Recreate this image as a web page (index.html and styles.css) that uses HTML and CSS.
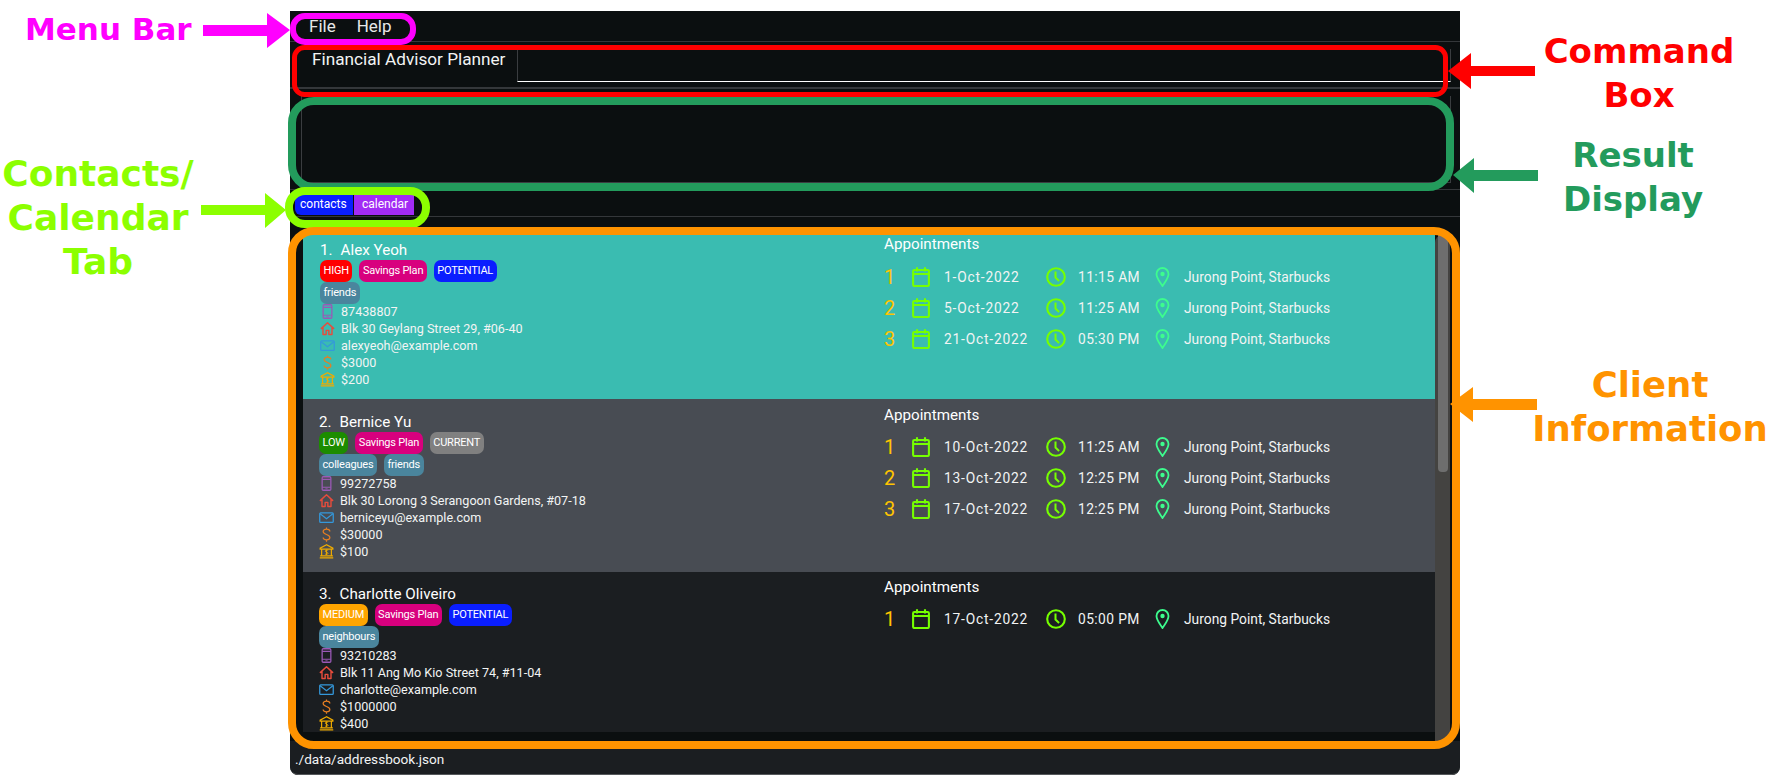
FILE: index.html
```html
<!DOCTYPE html>
<html lang="en">
<head>
<meta charset="utf-8">
<title>Financial Advisor Planner</title>
<link rel="stylesheet" href="styles.css">
</head>
<body>
<svg class="sprites" width="0" height="0" aria-hidden="true">
  <symbol id="i-phone" viewBox="0 0 16 20"><rect x="2.2" y="1" width="11.6" height="18" rx="1.5" fill="none" stroke="currentColor" stroke-width="1.7"/><path d="M2.2 4.5h11.6M2.2 15h11.6" stroke="currentColor" stroke-width="1.4"/><path d="M6.5 17h3" stroke="currentColor" stroke-width="1"/></symbol>
  <symbol id="i-home" viewBox="0 0 20 20"><path d="M1.2 10.5 10 2.2l8.8 8.3M4 8.500V18h4.200v-5.500h3.600V18H16V8.500" fill="none" stroke="currentColor" stroke-width="1.9" stroke-linejoin="round"/></symbol>
  <symbol id="i-mail" viewBox="0 0 20 16"><rect x="1" y="1.8" width="18" height="12.6" rx="1.2" fill="none" stroke="currentColor" stroke-width="1.7"/><path d="M1.5 3 10 9.500 18.500 3" fill="none" stroke="currentColor" stroke-width="1.6"/></symbol>
  <symbol id="i-dollar" viewBox="0 0 12 20"><path d="M10.500 6C10.500 3.800 8.400 2.800 6 2.800S1.500 4 1.500 6c0 4.600 9 3.300 9 8 0 2.100-2 3.200-4.500 3.200S1.500 16.100 1.500 14M6 .5v2.300M6 17.200v2.300" fill="none" stroke="currentColor" stroke-width="1.6"/></symbol>
  <symbol id="i-bank" viewBox="0 0 20 20"><path d="M10 1 1.500 5.500v1.300h17V5.500zM3.500 7v8.500M16.500 7v8.500M1.500 15.800h17M1 18.500h18" fill="none" stroke="currentColor" stroke-width="1.6"/><path d="M12.200 8.800c-.4-.8-3.800-1-3.900.7-.1 1.900 3.800 1 3.700 3-.1 1.700-3.600 1.500-4.100.5M10 7.500v7" fill="none" stroke="currentColor" stroke-width="1.2"/></symbol>
  <symbol id="i-cal" viewBox="0 0 18 20"><rect x="1.100" y="3" width="15.800" height="16" rx="1.200" fill="none" stroke="currentColor" stroke-width="2.100"/><path d="M1 7h16M5 .2v4.300M13 .2v4.300" stroke="currentColor" stroke-width="2.100"/></symbol>
  <symbol id="i-clock" viewBox="0 0 20 20"><circle cx="10" cy="10" r="8.800" fill="none" stroke="currentColor" stroke-width="2.100"/><path d="M9.500 4.500v6l3.600 3.400" fill="none" stroke="currentColor" stroke-width="2"/></symbol>
  <symbol id="i-pin" viewBox="0 0 14 20"><path d="M7 19C4 14.500 1 11 1 7a6 6 0 0 1 12 0c0 4-3 7.500-6 12z" fill="none" stroke="currentColor" stroke-width="1.800"/><circle cx="7" cy="7" r="2.200" fill="currentColor"/></symbol>
</svg>

<main class="stage">
  <div class="window">
    <nav class="menubar"><span class="menu-item">File</span><span class="menu-item">Help</span></nav>
    <section class="command">
      <span class="command-title">Financial Advisor Planner</span>
      <div class="command-field"></div>
    </section>
    <section class="result"><div class="result-box"></div></section>
    <section class="tabs"><span class="tab tab-contacts">contacts</span><span class="tab tab-calendar">calendar</span></section>

    <section class="list-pane">
      <div class="list">
        <article class="card card-first">
          <div class="person">
            <h2 class="name"><span class="index">1.</span>Alex Yeoh</h2>
            <div class="tags"><span class="tag t-high">HIGH</span><span class="tag t-plan">Savings Plan</span><span class="tag t-blue">POTENTIAL</span></div>
            <div class="tags"><span class="tag t-teal">friends</span></div>
            <ul class="fields">
              <li><svg class="ic c-phone"><use href="#i-phone"/></svg>87438807</li>
              <li><svg class="ic c-home"><use href="#i-home"/></svg>Blk 30 Geylang Street 29, #06-40</li>
              <li><svg class="ic c-mail"><use href="#i-mail"/></svg>alexyeoh@example.com</li>
              <li><svg class="ic c-dollar"><use href="#i-dollar"/></svg>$3000</li>
              <li><svg class="ic c-bank"><use href="#i-bank"/></svg>$200</li>
            </ul>
          </div>
          <div class="appts">
            <h3 class="appts-title">Appointments</h3>
            <div class="appt"><span class="no">1</span><svg class="ai c-cal"><use href="#i-cal"/></svg><span class="dt">1-Oct-2022</span><svg class="ai c-cal"><use href="#i-clock"/></svg><span class="tm">11:15 AM</span><svg class="ai c-pin"><use href="#i-pin"/></svg><span>Jurong Point, Starbucks</span></div>
            <div class="appt"><span class="no">2</span><svg class="ai c-cal"><use href="#i-cal"/></svg><span class="dt">5-Oct-2022</span><svg class="ai c-cal"><use href="#i-clock"/></svg><span class="tm">11:25 AM</span><svg class="ai c-pin"><use href="#i-pin"/></svg><span>Jurong Point, Starbucks</span></div>
            <div class="appt"><span class="no">3</span><svg class="ai c-cal"><use href="#i-cal"/></svg><span class="dt">21-Oct-2022</span><svg class="ai c-cal"><use href="#i-clock"/></svg><span class="tm">05:30 PM</span><svg class="ai c-pin"><use href="#i-pin"/></svg><span>Jurong Point, Starbucks</span></div>
          </div>
        </article>

        <article class="card card-second">
          <div class="person">
            <h2 class="name"><span class="index">2.</span>Bernice Yu</h2>
            <div class="tags"><span class="tag t-low">LOW</span><span class="tag t-plan">Savings Plan</span><span class="tag t-grey">CURRENT</span></div>
            <div class="tags"><span class="tag t-teal">colleagues</span><span class="tag t-teal">friends</span></div>
            <ul class="fields">
              <li><svg class="ic c-phone"><use href="#i-phone"/></svg>99272758</li>
              <li><svg class="ic c-home"><use href="#i-home"/></svg>Blk 30 Lorong 3 Serangoon Gardens, #07-18</li>
              <li><svg class="ic c-mail"><use href="#i-mail"/></svg>berniceyu@example.com</li>
              <li><svg class="ic c-dollar"><use href="#i-dollar"/></svg>$30000</li>
              <li><svg class="ic c-bank"><use href="#i-bank"/></svg>$100</li>
            </ul>
          </div>
          <div class="appts">
            <h3 class="appts-title">Appointments</h3>
            <div class="appt"><span class="no">1</span><svg class="ai c-cal"><use href="#i-cal"/></svg><span class="dt">10-Oct-2022</span><svg class="ai c-cal"><use href="#i-clock"/></svg><span class="tm">11:25 AM</span><svg class="ai c-pin"><use href="#i-pin"/></svg><span>Jurong Point, Starbucks</span></div>
            <div class="appt"><span class="no">2</span><svg class="ai c-cal"><use href="#i-cal"/></svg><span class="dt">13-Oct-2022</span><svg class="ai c-cal"><use href="#i-clock"/></svg><span class="tm">12:25 PM</span><svg class="ai c-pin"><use href="#i-pin"/></svg><span>Jurong Point, Starbucks</span></div>
            <div class="appt"><span class="no">3</span><svg class="ai c-cal"><use href="#i-cal"/></svg><span class="dt">17-Oct-2022</span><svg class="ai c-cal"><use href="#i-clock"/></svg><span class="tm">12:25 PM</span><svg class="ai c-pin"><use href="#i-pin"/></svg><span>Jurong Point, Starbucks</span></div>
          </div>
        </article>

        <article class="card card-third">
          <div class="person">
            <h2 class="name"><span class="index">3.</span>Charlotte Oliveiro</h2>
            <div class="tags"><span class="tag t-medium">MEDIUM</span><span class="tag t-plan">Savings Plan</span><span class="tag t-blue">POTENTIAL</span></div>
            <div class="tags"><span class="tag t-teal">neighbours</span></div>
            <ul class="fields">
              <li><svg class="ic c-phone"><use href="#i-phone"/></svg>93210283</li>
              <li><svg class="ic c-home"><use href="#i-home"/></svg>Blk 11 Ang Mo Kio Street 74, #11-04</li>
              <li><svg class="ic c-mail"><use href="#i-mail"/></svg>charlotte@example.com</li>
              <li><svg class="ic c-dollar"><use href="#i-dollar"/></svg>$1000000</li>
              <li><svg class="ic c-bank"><use href="#i-bank"/></svg>$400</li>
            </ul>
          </div>
          <div class="appts">
            <h3 class="appts-title">Appointments</h3>
            <div class="appt"><span class="no">1</span><svg class="ai c-cal"><use href="#i-cal"/></svg><span class="dt">17-Oct-2022</span><svg class="ai c-cal"><use href="#i-clock"/></svg><span class="tm">05:00 PM</span><svg class="ai c-pin"><use href="#i-pin"/></svg><span>Jurong Point, Starbucks</span></div>
          </div>
        </article>
      </div>
      <div class="scrollbar"><div class="thumb"></div></div>
    </section>

    <footer class="status">./data/addressbook.json</footer>
  </div>
</main>

<svg class="overlay" width="1774" height="780" aria-hidden="true">
  <rect class="o-magenta" x="293" y="16" width="120" height="26" rx="12"/>
  <rect class="o-red" x="294.5" y="47.5" width="1151" height="47" rx="10"/>
  <rect class="o-green" x="292" y="101" width="1158" height="86" rx="22"/>
  <rect class="o-lime" x="289" y="191" width="137" height="33" rx="16"/>
  <rect class="o-orange" x="292" y="231" width="1164" height="514" rx="22"/>
  <polygon class="a-magenta" points="203,25 267,25 267,13 290,30 267,48 267,36 203,36"/>
  <polygon class="a-red" points="1535,66 1471,66 1471,53 1448,71 1471,89 1471,76 1535,76"/>
  <polygon class="a-green" points="1538,170 1474,170 1474,158 1453,175 1474,193 1474,181 1538,181"/>
  <polygon class="a-lime" points="201,205 265,205 265,193 286,210 265,228 265,215 201,215"/>
  <polygon class="a-orange" points="1537,399 1473,399 1473,387 1450,404 1473,422 1473,410 1537,410"/>
</svg>

<div class="label l-menu">Menu Bar</div>
<div class="label l-command">Command<br>Box</div>
<div class="label l-result">Result<br>Display</div>
<div class="label l-tab">Contacts/<br>Calendar<br>Tab</div>
<div class="label l-client">Client<br>Information</div>
</body>
</html>
```

FILE: styles.css
```css
* { box-sizing: border-box; }
html, body { margin: 0; padding: 0; background: #fff; }
body {
  width: 1774px;
  height: 780px;
  overflow: hidden;
  position: relative;
  font-family: Roboto, Inter, sans-serif;
  color: #f2f4f4;
}
.sprites { position: absolute; }

.stage { padding: 11px 0 0 290px; }
.window {
  width: 1170px;
  height: 764px;
  background: #0b0f10;
  display: flex;
  flex-direction: column;
  border-radius: 0 0 8px 8px;
  overflow: hidden;
}

.menubar {
  height: 31px;
  flex: none;
  display: flex;
  gap: 21px;
  padding: 7px 0 0 19px;
  border-bottom: 1px solid #34373a;
  font-size: 17px;
  line-height: 16px;
  color: #e8e8e8;
}

.command {
  height: 47px;
  flex: none;
  display: flex;
  padding: 7px 9px 0 22px;
  border-bottom: 2px solid #34373a;
}
.command-title { width: 205px; font-size: 17.200px; line-height: 20px; flex: none; }
.command-field {
  flex: 1;
  height: 33px;
  border-left: 1px solid #3a3d40;
  border-right: 1px solid #3a3d40;
  border-bottom: 1px solid #fff;
}

.result { height: 101px; flex: none; padding: 7px 9px 0 11px; border-bottom: 1px solid #34373a; }
.result-box { height: 87px; border-left: 1px solid #3a3d40; border-right: 1px solid #3a3d40; border-bottom: 1px solid #3a3d40; }

.tabs { height: 27px; flex: none; display: flex; padding: 5px 0 0 5px; border-bottom: 1px solid #34373a; }
.tab { height: 20px; font-size: 12px; line-height: 18px; padding: 0 6px; color: #fff; }
.tab-contacts { background: #0a1eff; width: 59px; border-radius: 6px 0 0 6px; border-right: 1px solid #0b0f10; padding-left: 5px; }
.tab-calendar { background: #a22bf5; width: 60px; padding-left: 8px; }

.list-pane {
  flex: none;
  height: 524px;
  padding: 18px 10px 0 13px;
  display: flex;
}
.list { width: 1132px; height: 497px; overflow: hidden; }
.scrollbar { width: 15px; height: 506px; background: #444341; padding: 0 2px 0 3px; border-radius: 8px 8px 8px 0; }
.thumb { height: 237px; background: #6e6e6e; border-radius: 0 0 4px 4px; }

.card { display: flex; height: 173px; padding: 13px 0 0 16px; }
.card-first { height: 164px; padding: 5px 0 0 17px; background: #3abcb1; }
.card-second { background: #484c53; }
.card-third { background: #1b1e21; padding-top: 12px; }

.person { width: 565px; flex: none; }
.card-first .person { width: 564px; }
.name { margin: 0; font-size: 15.200px; font-weight: 400; line-height: 20px; color: #fff; }
.index { margin-right: 8px; }
.tags { display: flex; gap: 7px; height: 22px; }
.tag { height: 22px; padding: 0 3.500px; font-size: 11px; letter-spacing: -0.2px; line-height: 21px; border-radius: 7px; color: #fff; }
.t-high { background: #ff0000; }
.t-low { background: #1c8c00; }
.t-medium { background: #ffa500; }
.t-plan { background: #d8007e; }
.t-blue { background: #0a1eff; }
.t-grey { background: #808080; }
.t-teal { background: #4a859d; }

.fields { list-style: none; margin: -1px 0 0; padding: 0; font-size: 12.600px; }
.fields li { height: 17px; line-height: 17px; display: flex; align-items: center; }
.ic { width: 15px; height: 15px; margin-right: 6px; flex: none; }
.c-phone { color: #9b59b6; }
.c-home { color: #e74c3c; }
.c-mail { color: #3498db; }
.c-dollar { color: #e67e22; }
.c-bank { color: #f0ac00; }
.c-cal { color: #76ff00; }
.c-pin { color: #3dfc8e; }

.appts { flex: 1; margin-top: -6px; }
.card-first .appts { margin-top: -5px; }
.appts-title { margin: 0 0 7px; font-size: 15.200px; font-weight: 400; line-height: 18px; color: #fff; }
.card-first .appts-title { margin-bottom: 8px; }
.appt {
  display: grid;
  grid-template-columns: 28px 18px 14px 102px 20px 12px 77px 15px 14px 1fr;
  height: 31px;
  align-items: center;
  font-size: 13.800px;
}
.appt span:nth-of-type(2) { grid-column: 4; }
.appt span:nth-of-type(3) { grid-column: 7; }
.appt span:nth-of-type(4) { grid-column: 10; }
.appt svg:nth-of-type(1) { grid-column: 2; }
.appt svg:nth-of-type(2) { grid-column: 5; }
.appt svg:nth-of-type(3) { grid-column: 8; }
.dt { letter-spacing: 0.8px; }
.tm { letter-spacing: 0.4px; }
.no { font-size: 20px; color: #ffc400; }
.ai { width: 100%; height: 20px; }

.status {
  flex: 1;
  background: #1b1e21;
  border-bottom: 1px solid #55585b;
  border-radius: 0 0 8px 8px;
  padding: 10px 0 0 5px;
  font-size: 13.600px;
  line-height: 16px;
}

.overlay { position: absolute; left: 0; top: 0; }
.overlay rect { fill: none; }
.o-magenta { stroke: #ff00ff; stroke-width: 6; }
.o-red { stroke: #ff0000; stroke-width: 5; }
.o-green { stroke: #239b5c; stroke-width: 8; }
.o-lime { stroke: #8cff00; stroke-width: 8; }
.o-orange { stroke: #ff9300; stroke-width: 8; }
.a-magenta { fill: #ff00ff; }
.a-red { fill: #ff0000; }
.a-green { fill: #239b5c; }
.a-lime { fill: #8cff00; }
.a-orange { fill: #ff9300; }

.label {
  position: absolute;
  font-family: "DejaVu Sans", sans-serif;
  font-weight: 700;
  text-align: center;
  white-space: nowrap;
  font-size: 34px;
  line-height: 44px;
}
.l-menu { left: 25px; top: 7px; font-size: 31px; color: #ff00ff; }
.l-command { left: 1519px; top: 29px; width: 240px; color: #ff0000; }
.l-result { left: 1513px; top: 133px; width: 240px; color: #239b5c; }
.l-tab { left: -22px; top: 152px; width: 240px; font-size: 36px; color: #8cff00; }
.l-client { left: 1530px; top: 363px; width: 240px; font-size: 35.500px; color: #ff9300; }
```
